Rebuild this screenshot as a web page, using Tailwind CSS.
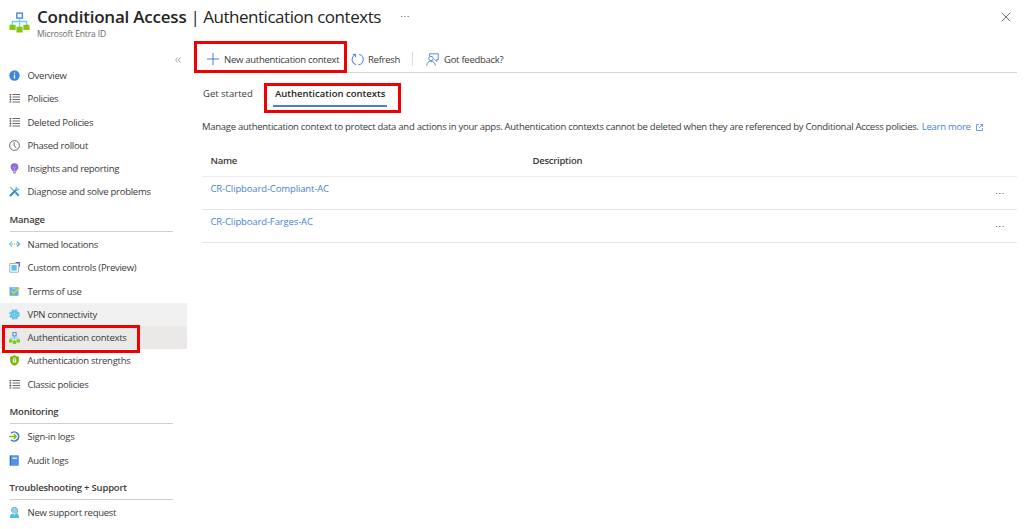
<!DOCTYPE html>
<html lang="en">
<head>
  <meta charset="UTF-8">
  <meta name="viewport" content="width=device-width, initial-scale=1.0">
  <title>Conditional Access | Authentication contexts</title>
  <script src="https://cdn.jsdelivr.net/npm/@tailwindcss/browser@4"></script>
</head>
<body class="w-[1024px] h-[529px] overflow-hidden bg-white text-[#3b3a39] text-[9.5px] tracking-[-0.27px] font-['Open_Sans','Noto_Sans',sans-serif]">
  <!-- Shared icons -->
  <svg class="hidden">
    <symbol id="list" viewBox="0 0 11 11">
      <path d="M0 1.500h2.500M0 4h2.500M0 6.500h2.500M0 9h2.500" stroke="#999" stroke-width="1" fill="none"/>
      <path d="M1.500 1v8.500" stroke="#777" stroke-width=".8"/>
      <path d="M3.500 1.500H11M3.500 4H11M3.500 6.500H11M3.500 9H11" stroke="#6a6a6a" stroke-width="1.100" fill="none"/>
    </symbol>
    <symbol id="tree" viewBox="0 0 22 22">
      <path d="M11 8v9M3.500 15v-4.500h15v4.500" fill="none" stroke="#6fd0f5" stroke-width="1.400"/>
      <rect x="8.200" y="1.700" width="5.800" height="5.200" fill="#fff" stroke="#4f86e0" stroke-width="1.500"/>
      <path d="M.5 14h6.500v5.500h-6.500zM7.800 16h6.400v6h-6.400zM15 14h6.500v5.500h-6.500z" fill="#86c60c"/>
    </symbol>
  </svg>

  <header class="h-[43px] flex items-start pl-[9px]">
    <svg class="w-[21px] h-[22px] mt-[11px]"><use href="#tree"/></svg>
    <div class="ml-[7px] pt-[5px]">
      <h1 class="text-[17px] leading-[23px] text-[#252423] whitespace-nowrap"><b class="font-semibold tracking-[-0.22px]">Conditional Access</b><span class="tracking-[-0.47px]"> | Authentication contexts</span></h1>
      <p class="text-[8.500px] leading-[12px] text-[#6b6967] tracking-[-0.15px]">Microsoft Entra ID</p>
    </div>
    <svg class="w-[10px] h-[3px] mt-[15px] ml-[19px]" viewBox="0 0 10 3"><path d="M1 1.500h1.200M4.300 1.500h1.200M7.600 1.500h1.200" stroke="#777" stroke-width="1"/></svg>
    <svg class="w-[10px] h-[10px] mt-[12px] ml-auto mr-[13px]" viewBox="0 0 10 10"><path d="M.7.7l8.600 8.600M9.300.7L.7 9.300" stroke="#666" stroke-width=".9"/></svg>
  </header>

  <div class="flex">
    <nav class="w-[187px] shrink-0 relative">
      <div class="h-[21px] flex items-center justify-end pt-[12px] pr-[6px]">
        <svg class="w-[6px] h-[6px]" viewBox="0 0 6 6"><path d="M2.800.5L.6 3l2.200 2.500M5.500.5L3.300 3l2.200 2.500" stroke="#777" stroke-width=".7" fill="none"/></svg>
      </div>
      <ul>
        <li class="h-[23.250px] flex items-center pl-[9px] gap-[7.500px]">
          <svg class="w-[11px] h-[11px]" viewBox="0 0 11 11"><circle cx="5.500" cy="5.500" r="5.200" fill="#3f86dc"/><path d="M5.500 4.700v3.800M5.500 2.400v1.300" stroke="#fff" stroke-width="1.300"/></svg>
          <span class="pt-px">Overview</span>
        </li>
        <li class="h-[23.250px] flex items-center pl-[9px] gap-[7.500px]"><svg class="w-[11px] h-[11px]"><use href="#list"/></svg><span class="pt-px">Policies</span></li>
        <li class="h-[23.250px] flex items-center pl-[9px] gap-[7.500px]"><svg class="w-[11px] h-[11px]"><use href="#list"/></svg><span class="pt-px">Deleted Policies</span></li>
        <li class="h-[23.250px] flex items-center pl-[9px] gap-[7.500px]">
          <svg class="w-[11px] h-[11px]" viewBox="0 0 11 11"><circle cx="5.500" cy="5.500" r="4.900" fill="none" stroke="#555" stroke-width=".9"/><path d="M5.200 2.200v3.600l2.200 2" fill="none" stroke="#555" stroke-width=".9"/></svg>
          <span class="pt-px">Phased rollout</span>
        </li>
        <li class="h-[23.250px] flex items-center pl-[9px] gap-[7.500px]">
          <svg class="w-[11px] h-[11px]" viewBox="0 0 11 11"><path d="M5.500.3a3.900 3.900 0 0 1 3.900 3.900c0 2-1.900 2.700-2.200 4.200H3.800C3.500 6.900 1.600 6.200 1.600 4.200A3.900 3.900 0 0 1 5.500.3z" fill="#8f66e6"/><path d="M4 8.700h3v1.200l-1 .8H5l-1-.8z" fill="#a59bb8"/><path d="M3.700 3.600l1.800 1.300 1.800-1.300M5.500 5v3.300" stroke="#c3a8fa" stroke-width=".8" fill="none"/></svg>
          <span class="pt-px">Insights and reporting</span>
        </li>
        <li class="h-[23.250px] flex items-center pl-[9px] gap-[7.500px]">
          <svg class="w-[11px] h-[11px]" viewBox="0 0 11 11"><path d="M1 1l6.500 6.500" stroke="#8ba7ba" stroke-width="1.100"/><path d="M6.800 6.800l3 3" stroke="#2e9bd8" stroke-width="2"/><path d="M1 10l7-7" stroke="#2484cb" stroke-width="1.800"/><path d="M7.500.8L7 3.800l3.200-.6" stroke="#4fc3ee" stroke-width="1.500" fill="none"/></svg>
          <span class="pt-px">Diagnose and solve problems</span>
        </li>
      </ul>

      <h2 class="h-[28.500px] w-[163px] ml-[9.500px] mb-px pt-[6px] flex items-center font-semibold tracking-[-0.2px] border-b border-[#d2d0ce]">Manage</h2>
      <ul>
        <li class="h-[23.250px] flex items-center pl-[9px] gap-[7.500px]">
          <svg class="w-[11px] h-[11px]" viewBox="0 0 11 11"><path d="M3 2.700L.6 5.200 3 7.700" fill="none" stroke="#5cc4ee" stroke-width="1.200"/><path d="M8 2.700l2.400 2.500L8 7.700" fill="none" stroke="#4a9be0" stroke-width="1.200"/><path d="M2.700 5.200h1.300M4.900 5.200h1.300M7 5.200h1.300" stroke="#94ca37" stroke-width="1.300"/></svg>
          <span class="pt-px">Named locations</span>
        </li>
        <li class="h-[23.250px] flex items-center pl-[9px] gap-[7.500px]">
          <svg class="w-[11px] h-[11px]" viewBox="0 0 11 11"><path d="M6.500 1.500H.8v8.700h8.700V5" fill="none" stroke="#a9adb0" stroke-width="1"/><path d="M2.400 3h5.300v5.600H2.400z" fill="#54c4ef"/><path d="M6.500.8h3.700v4" fill="none" stroke="#7a4bd6" stroke-width="1.400"/></svg>
          <span class="pt-px">Custom controls (Preview)</span>
        </li>
        <li class="h-[23.250px] flex items-center pl-[9px] gap-[7.500px]">
          <svg class="w-[11px] h-[11px]" viewBox="0 0 11 11"><path d="M.5 1h9v8.800h-9z" fill="#62b0e0"/><path d="M.5 1h9L5 4.300z" fill="#86c5ea"/><path d="M2.500 5l2.300 2.300L10.400 1.800" fill="none" stroke="#c3da3c" stroke-width="1.600"/></svg>
          <span class="pt-px">Terms of use</span>
        </li>
        <li class="h-[23.250px] flex items-center pl-[9px] gap-[7.500px] bg-[#f1f1f1]">
          <svg class="w-[11px] h-[11px]" viewBox="0 0 11 11"><circle cx="5.500" cy="5.500" r="4.300" fill="none" stroke="#65c3ea" stroke-width="2" stroke-dasharray="2.200 1.180"/><circle cx="5.500" cy="5.500" r="3.900" fill="#5fbfe9"/><path d="M4.200 4.300a1.900 1.900 0 1 0 2.600 0M5.500 3.200v2.200" stroke="#a5e1f7" stroke-width=".8" fill="none"/></svg>
          <span class="pt-px">VPN connectivity</span>
        </li>
        <li class="h-[23.250px] flex items-center pl-[9px] gap-[7.500px] bg-[#eae9e8]">
          <svg class="w-[11px] h-[12px]" viewBox="0 0 11 12"><path d="M5.500 4v5M1.800 8V6h7.400v2" fill="none" stroke="#6fd0f5" stroke-width="1"/><rect x="3.900" y=".7" width="3.200" height="3.200" fill="#fff" stroke="#4f86e0" stroke-width="1.100"/><path d="M0 7.500h3.500v3H0zM3.900 8.700h3.300V12H3.900zM7.600 7.500H11v3H7.600z" fill="#86c60c"/></svg>
          <span class="pt-px">Authentication contexts</span>
        </li>
        <li class="h-[23.250px] flex items-center pl-[9px] gap-[7.500px]">
          <svg class="w-[11px] h-[11px]" viewBox="0 0 11 11"><path d="M5.500.2c1.300.9 2.700 1.200 4.300 1.200v4c0 2.700-2 4.300-4.300 5.400C3.200 9.700 1.200 8.100 1.200 5.400v-4c1.600 0 3-.3 4.300-1.200z" fill="#72b003"/><path d="M3.700 4.600h3.600v3H3.700z" fill="#fff"/><path d="M4.300 4.800v-1a1.200 1.200 0 0 1 2.400 0v1" fill="none" stroke="#fff" stroke-width=".8"/><path d="M5.500 5.300v1.500" stroke="#72b003" stroke-width=".9"/></svg>
          <span class="pt-px">Authentication strengths</span>
        </li>
        <li class="h-[23.250px] flex items-center pl-[9px] gap-[7.500px]"><svg class="w-[11px] h-[11px]"><use href="#list"/></svg><span class="pt-px">Classic policies</span></li>
      </ul>

      <h2 class="h-[28.500px] w-[163px] ml-[9.500px] mb-px pt-[6px] flex items-center font-semibold tracking-[-0.2px] border-b border-[#d2d0ce]">Monitoring</h2>
      <ul>
        <li class="h-[23.250px] flex items-center pl-[9px] gap-[7.500px]">
          <svg class="w-[11px] h-[11px]" viewBox="0 0 11 11"><path d="M2 2.300A4.500 4.500 0 1 1 2 8.700" fill="none" stroke="#3a78d4" stroke-width="1.600"/><path d="M.3 5.500H7M4.800 3l2.500 2.500L4.800 8" fill="none" stroke="#7fba12" stroke-width="1.400"/></svg>
          <span class="pt-px">Sign-in logs</span>
        </li>
        <li class="h-[23.250px] flex items-center pl-[9px] gap-[7.500px]">
          <svg class="w-[11px] h-[11px]" viewBox="0 0 11 11"><rect x=".8" y=".2" width="9" height="10.600" rx=".8" fill="#4f92e6"/><path d="M.8.5h1.200v10H.8z" fill="#2f6fc6"/><path d="M3.400 2.500h4.500v1.500H3.400z" fill="#dcecff"/></svg>
          <span class="pt-px">Audit logs</span>
        </li>
      </ul>

      <h2 class="h-[28.500px] w-[163px] ml-[9.500px] mb-px pt-[6px] flex items-center font-semibold tracking-[-0.2px] border-b border-[#d2d0ce]">Troubleshooting + Support</h2>
      <ul>
        <li class="h-[23.250px] flex items-center pl-[9px] gap-[7.500px]">
          <svg class="w-[11px] h-[11px]" viewBox="0 0 11 11"><path d="M.9 10.900c0-3 1.300-4.300 2.600-4.500h4c1.300.2 2.600 1.500 2.600 4.500z" fill="#52bce6"/><circle cx="5.500" cy="3.700" r="2.700" fill="#8ad4ee"/><path d="M2.500 4.500V3.300a3 3 0 0 1 6 0v1.700c0 .8-.8 1.200-2 1.200" fill="none" stroke="#6b98ad" stroke-width=".9"/><path d="M4 6.500l1.500 1.800L7 6.500z" fill="#d8f3fc"/></svg>
          <span class="pt-px">New support request</span>
        </li>
      </ul>
      <div class="absolute left-[2px] top-[282px] w-[138px] h-[28px] border-3 border-[#f00000]"></div>
    </nav>

    <main class="w-[823px] ml-[7px] relative">
      <div class="h-[30px] flex items-center pt-[3px] pl-[13px] border-b border-[#d6d6d6] whitespace-nowrap">
        <svg class="w-[12px] h-[12px]" viewBox="0 0 12 12"><path d="M6 0v12M0 6h12" stroke="#4a7fd6" stroke-width="1"/></svg>
        <span class="ml-[5px] w-[116px] pt-[2px]">New authentication context</span>
        <svg class="w-[13px] h-[13px] ml-[11px]" viewBox="0 0 13 13"><path d="M4.300 1.600A5.300 5.300 0 0 0 5.200 11.700M8.300 1.400a5.300 5.300 0 0 1-.9 10.400M1.700 1.400h2.800v2.800" fill="none" stroke="#4a7fd6" stroke-width="1"/></svg>
        <span class="ml-[4px] w-[32px] pt-[2px]">Refresh</span>
        <span class="w-px h-[14px] bg-[#dcdcdc] ml-[12px]"></span>
        <svg class="w-[13px] h-[13px] ml-[13px]" viewBox="0 0 13 13"><path d="M3.500 3V.8h8.800v5.800h-1.500v1.900L8.800 6.600H8" fill="none" stroke="#4a7fd6" stroke-width=".9"/><circle cx="5" cy="5.500" r="2.200" fill="none" stroke="#4a7fd6" stroke-width=".9"/><path d="M.7 12.500a4.300 4.300 0 0 1 8.600 0" fill="none" stroke="#4a7fd6" stroke-width=".9"/></svg>
        <span class="ml-[5px] pt-[2px]">Got feedback?</span>
      </div>
      <div class="h-[33px] flex pt-[10px] pl-[9px] tracking-normal whitespace-nowrap">
        <div class="w-[50px] h-[22px] leading-[22px]">Get started</div>
        <div class="h-[24px] w-[114px] pl-[2px] ml-[20px] leading-[22px] font-semibold text-[#252423] border-b-2 border-[#4a7fd6]">Authentication contexts</div>
      </div>
      <p class="h-[14px] mt-[14px] ml-[8px] leading-[14px] whitespace-nowrap flex items-center">
        Manage authentication context to protect data and actions in your apps. Authentication contexts cannot be deleted when they are referenced by Conditional Access policies.
        <a class="text-[#4a82dc] ml-[3px]">Learn more</a>
        <svg class="w-[7px] h-[7px] ml-[5px]" viewBox="0 0 7 7"><path d="M3 .6H.5v5.900h5.900V4M4.200.5h2.300v2.300M6.400.6L3.300 3.700" fill="none" stroke="#4a82dc" stroke-width=".8"/></svg>
      </p>
      <div class="ml-[8px] mt-[11px]">
        <div class="h-[32px] grid grid-cols-[322px_1fr] items-center pt-px pl-[8.500px] font-semibold border-b border-[#ececec]"><span>Name</span><span>Description</span></div>
        <div class="h-[33px] flex items-center justify-between pl-[8.500px] pr-[12px] border-b border-[#e6e6e6]">
          <a class="text-[#4a82dc] pb-[7px] tracking-[-0.13px]">CR-Clipboard-Compliant-AC</a>
          <svg class="w-[10px] h-[3px]" viewBox="0 0 10 3"><path d="M1 1.500h1.200M4.300 1.500h1.200M7.600 1.500h1.200" stroke="#777" stroke-width="1"/></svg>
        </div>
        <div class="h-[33px] flex items-center justify-between pl-[8.500px] pr-[12px] border-b border-[#e6e6e6]">
          <a class="text-[#4a82dc] pb-[7px] tracking-[-0.13px]">CR-Clipboard-Farges-AC</a>
          <svg class="w-[10px] h-[3px]" viewBox="0 0 10 3"><path d="M1 1.500h1.200M4.300 1.500h1.200M7.600 1.500h1.200" stroke="#777" stroke-width="1"/></svg>
        </div>
      </div>
      <div class="absolute left-0 top-[-2px] w-[153px] h-[32px] border-3 border-[#f00000]"></div>
      <div class="absolute left-[70px] top-[40px] w-[137px] h-[30px] border-3 border-[#f00000]"></div>
    </main>
  </div>
</body>
</html>
